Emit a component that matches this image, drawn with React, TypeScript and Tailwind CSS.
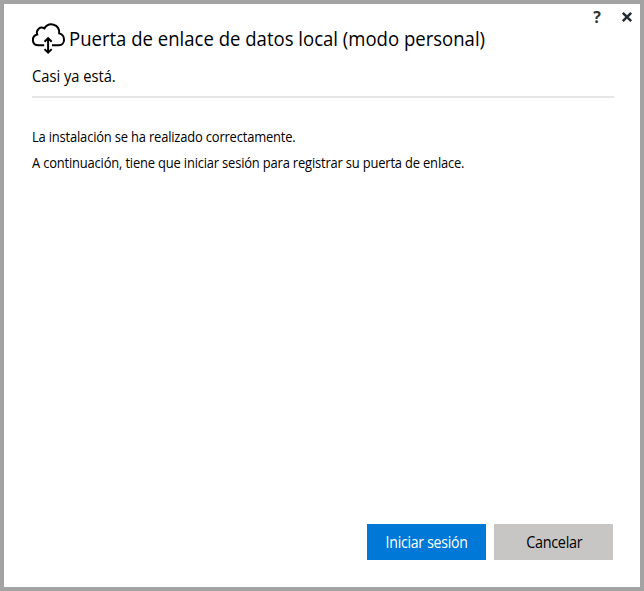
import React from "react";

function CloudIcon() {
  return (
    <svg className="-mt-0.5 -ml-0.5 h-9 w-9 shrink-0" viewBox="0 0 36 36" fill="none" stroke="#000" strokeWidth="2">
      <path d="M14.2 25.3H8.6C1.5 25.3 1 16.2 7.2 14.5C5.8 9.6 10.2 5.8 14.4 8.4C18.7 1.5 29.8 3.8 29.2 13.4C35.9 15.2 35.5 25.3 28.8 25.3H22" />
      <path d="M18.1 18.5V32.3M14.5 21.8L18.1 18.2L21.7 21.8M14.5 29.1L18.1 32.7L21.7 29.1" />
    </svg>
  );
}

export default function App() {
  return (
    <div className="flex h-[591px] w-[644px] flex-col border-4 border-[#a3a3a3] bg-white pr-[26px] pl-7 font-['Open_Sans','Noto_Sans',sans-serif] text-black">
      <div className="-mr-[26px] flex h-[17px] justify-end gap-[18px] pt-[3px] pr-[7px]">
        <button aria-label="Ayuda" className="h-5 w-3 text-center text-[16px] leading-5 font-bold text-[#333]">?</button>
        <button aria-label="Cerrar" className="flex h-5 w-3 items-center justify-center">
          <svg className="h-3 w-3" viewBox="0 0 12 12" stroke="#252b33" strokeWidth="2.5">
            <path d="M1.8 1.8L10.2 10.2M10.2 1.8L1.8 10.2" />
          </svg>
        </button>
      </div>
      <header className="border-b-2 border-[#e6e6e6] pb-2">
        <div className="flex h-9 items-center">
          <CloudIcon />
          <h1 className="ml-[3px] origin-left scale-x-[0.927] text-[20px] leading-9 whitespace-nowrap">Puerta de enlace de datos local (modo personal)</h1>
        </div>
        <p className="origin-left scale-x-[0.917] pt-[7px] text-[16px] leading-6">Casi ya está.</p>
      </header>
      <main className="flex-1 pt-[26px] text-[14px] leading-[26px] tracking-[-0.2px] whitespace-nowrap">
        <p className="origin-left scale-x-[0.925]">La instalación se ha realizado correctamente.</p>
        <p className="origin-left scale-x-[0.925]">A continuación, tiene que iniciar sesión para registrar su puerta de enlace.</p>
      </main>
      <footer className="flex justify-end gap-2 pr-px pb-[27px] text-[16px] tracking-[-0.3px]">
        <button className="h-9 w-[119px] bg-[#0078d7] text-white"><span className="inline-block scale-x-[0.88]">Iniciar sesión</span></button>
        <button className="h-9 w-[119px] bg-[#c8c6c4] pl-px"><span className="inline-block scale-x-[0.9]">Cancelar</span></button>
      </footer>
    </div>
  );
}
